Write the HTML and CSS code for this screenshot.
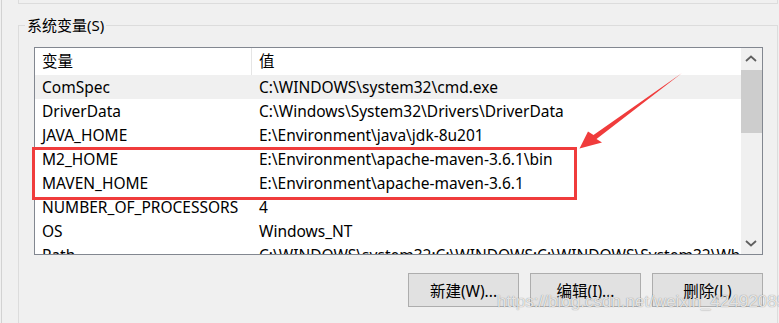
FILE: index.html
```html
<!DOCTYPE html>
<html lang="zh-CN">
<head>
  <meta charset="UTF-8" />
  <meta name="viewport" content="width=device-width, initial-scale=1.0" />
  <title>环境变量</title>
  <link rel="stylesheet" href="styles.css">
</head>
<body>
  <div class="window">
    <div class="user-box"></div>

    <fieldset class="group">
      <legend>系统变量(S)</legend>

      <div class="listbox">
        <div class="list">
          <div class="row head"><span>变量</span><span>值</span></div>
          <div class="row sel"><span>ComSpec</span><span>C:\WINDOWS\system32\cmd.exe</span></div>
          <div class="row"><span>DriverData</span><span>C:\Windows\System32\Drivers\DriverData</span></div>
          <div class="row"><span>JAVA_HOME</span><span>E:\Environment\java\jdk-8u201</span></div>
          <div class="row"><span>M2_HOME</span><span>E:\Environment\apache-maven-3.6.1\bin</span></div>
          <div class="row"><span>MAVEN_HOME</span><span>E:\Environment\apache-maven-3.6.1</span></div>
          <div class="row"><span>NUMBER_OF_PROCESSORS</span><span>4</span></div>
          <div class="row"><span>OS</span><span>Windows_NT</span></div>
          <div class="row"><span>Path</span><span>C:\WINDOWS\system32;C:\WINDOWS;C:\WINDOWS\System32\Wbem;</span></div>
        </div>
        <div class="scrollbar">
          <div class="sb-btn">
            <svg width="21" height="22" viewBox="0 0 21 22"><polyline points="5,13 10,8.5 15,13" /></svg>
          </div>
          <div class="sb-track"><div class="sb-thumb"></div></div>
          <div class="sb-btn">
            <svg width="21" height="22" viewBox="0 0 21 22"><polyline points="5,9 10,13.5 15,9" /></svg>
          </div>
        </div>
      </div>

      <div class="buttons">
        <button>新建(W)...</button>
        <button>编辑(I)...</button>
        <button>删除(L)</button>
      </div>
    </fieldset>

    <!-- annotation drawn over the screenshot -->
    <div class="highlight"></div>
    <svg class="arrow" width="779" height="323" viewBox="0 0 779 323">
      <polygon points="682,73 596.5,139 602,142.5 579.5,148.5 588,131.5 593.5,135" />
    </svg>
    <div class="watermark">https://blog.csdn.net/weixin_42492089</div>
  </div>
</body>
</html>
```

FILE: styles.css
```css
* {
  box-sizing: border-box;
}

body {
  margin: 0;
  height: 323px;
  overflow: hidden;
  background: #f0f0f0;
  font-family: "Noto Sans", "Noto Sans CJK SC", sans-serif;
  font-size: 15.5px;
  color: #000;
}

.window {
  position: relative;
  height: 323px;
  margin-left: 1px;
  border-left: 1px solid #d2d2d2;
}

.user-box {
  margin-left: 16px;
  width: 760px;
  height: 4px;
  border: 1px solid #dcdcdc;
  border-top: none;
}

.group {
  margin: 11px 0 0 16px;
  width: 760px;
  min-width: 0;
  height: 308px;
  padding: 0 14px 0 15px;
  border: 1px solid #dcdcdc;
  border-bottom: none;
}

.group legend {
  margin-left: -9px;
  padding: 0 2px;
  line-height: 20px;
  font-size: 15px;
}

.listbox {
  display: flex;
  height: 208px;
  margin-top: 12px;
  border: 1px solid #828790;
  background: white;
}

.list {
  flex: 1;
  overflow: hidden;
}

.row {
  display: grid;
  grid-template-columns: 217px 1fr;
  height: 24px;
  line-height: 24px;
  white-space: nowrap;
}

.row span {
  padding-left: 7px;
  overflow: hidden;
}

.row.head {
  height: 27px;
  line-height: 27px;
}

.row.head span:first-child {
  border-right: 1px solid #e5e5e5;
}

.row.sel {
  background: #f0f0f0;
}

.scrollbar {
  display: flex;
  flex-direction: column;
  width: 21px;
  background: #f0f0f0;
}

.sb-btn {
  height: 22px;
}

.sb-btn svg {
  display: block;
}

.sb-btn polyline {
  fill: none;
  stroke: #606060;
  stroke-width: 1.8;
}

.sb-track {
  flex: 1;
}

.sb-thumb {
  height: 63px;
  background: #cdcdcd;
}

.buttons {
  display: flex;
  justify-content: flex-end;
  gap: 11px;
  margin-top: 18px;
}

.buttons button {
  width: 111px;
  height: 34px;
  background: #e1e1e1;
  border: 1px solid #adadad;
  font: inherit;
  color: #000;
  padding: 0;
}

.highlight {
  position: absolute;
  left: 30px;
  top: 147px;
  width: 545px;
  height: 53px;
  border: 3px solid #f03c3c;
}

.arrow {
  position: absolute;
  left: -2px;
  top: 0;
}

.arrow polygon {
  fill: #f03c3c;
}

.watermark {
  position: absolute;
  left: 495px;
  top: 292px;
  font-family: "Liberation Sans", sans-serif;
  font-size: 17px;
  color: rgba(255, 255, 255, 0.8);
  text-shadow: 0 0 1px rgba(0, 0, 0, 0.5);
  white-space: nowrap;
}
```
